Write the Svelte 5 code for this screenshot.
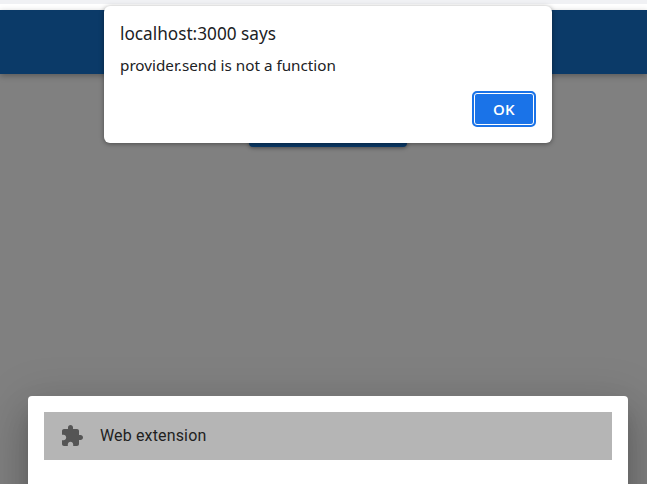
<script>
  let items = [{ label: 'Web extension' }];
</script>

<div class="page">
  <div class="browser-edge"></div>
  <header class="appbar"></header>

  <main class="content">
    <button class="connect" aria-label="Connect"></button>
  </main>

  <section class="sheet">
    {#each items as item}
      <div class="option">
        <svg class="option-icon" viewBox="0 0 24 24" aria-hidden="true">
          <path d="M20.5 11H19V7c0-1.1-.9-2-2-2h-4V3.5C13 2.12 11.88 1 10.5 1S8 2.12 8 3.5V5H4c-1.1 0-1.99.9-1.99 2v3.8H3.5c1.49 0 2.7 1.21 2.7 2.7s-1.21 2.7-2.7 2.7H2V20c0 1.1.9 2 2 2h3.8v-1.5c0-1.49 1.21-2.7 2.7-2.7 1.49 0 2.7 1.21 2.7 2.7V22H17c1.1 0 2-.9 2-2v-4h1.5c1.38 0 2.5-1.12 2.5-2.5S21.88 11 20.5 11z" />
        </svg>
        <span class="option-label">{item.label}</span>
      </div>
    {/each}
  </section>

  <div class="alert" role="alertdialog">
    <h2>localhost:3000 says</h2>
    <p>provider.send is not a function</p>
    <div class="alert-actions">
      <button class="ok">OK</button>
    </div>
  </div>
</div>

<style>
  :global(body) {
    background: #808080;
  }

  .page {
    position: relative;
    height: 484px;
    overflow: hidden;
    background: #808080;
  }

  .browser-edge {
    height: 4px;
    background: #f0f1f4;
    border-bottom: 6px solid #ffffff;
  }

  .appbar {
    height: 64px;
    background: #0b3a68;
    box-shadow: 0 2px 6px rgba(0, 0, 0, 0.3);
  }

  .content {
    display: flex;
    justify-content: center;
    padding: 37px 0 0 9px;
  }

  .connect {
    width: 158px;
    height: 36px;
    padding: 0;
    border: none;
    border-radius: 4px;
    background: #0b3a68;
    box-shadow: 0 1px 4px rgba(0, 0, 0, 0.4);
  }

  .sheet {
    margin: 249px 19px 0 28px;
    height: 200px;
    padding: 16px;
    border-radius: 4px;
    background: #ffffff;
    box-shadow: 0 11px 15px -7px rgba(0, 0, 0, 0.2), 0 24px 38px 3px rgba(0, 0, 0, 0.14), 0 9px 46px 8px rgba(0, 0, 0, 0.12);
  }

  .option {
    display: flex;
    align-items: center;
    gap: 16px;
    height: 48px;
    padding-left: 16px;
    background: #b5b5b5;
    font-family: Roboto, sans-serif;
    font-size: 16px;
    color: #1f1f1f;
  }

  .option-label {
    margin-top: -2px;
    letter-spacing: 0.15px;
  }

  .option-icon {
    width: 24px;
    height: 24px;
    fill: #555555;
  }

  .alert {
    position: absolute;
    top: 6px;
    left: 104px;
    box-sizing: border-box;
    width: 448px;
    height: 137px;
    padding: 16px;
    border-radius: 6px;
    background: #ffffff;
    box-shadow: 0 1px 5px rgba(0, 0, 0, 0.4);
    font-family: "Noto Sans", sans-serif;
    color: #202124;
  }

  .alert h2 {
    margin: 0;
    font-size: 17.2px;
    font-weight: 400;
    line-height: 24px;
  }

  .alert p {
    margin: 7px 0 0;
    font-size: 15.25px;
    line-height: 24px;
  }

  .alert-actions {
    display: flex;
    justify-content: flex-end;
    margin-top: 14px;
  }

  .ok {
    box-sizing: border-box;
    width: 64px;
    height: 36px;
    padding: 0;
    border: 2px solid #1a73e8;
    border-radius: 5px;
    background: #1a73e8;
    outline: 1.5px solid #ffffff;
    outline-offset: -3.5px;
    font-family: "Open Sans", sans-serif;
    font-size: 15px;
    font-weight: 600;
    letter-spacing: 0.3px;
    color: #ffffff;
  }
</style>
